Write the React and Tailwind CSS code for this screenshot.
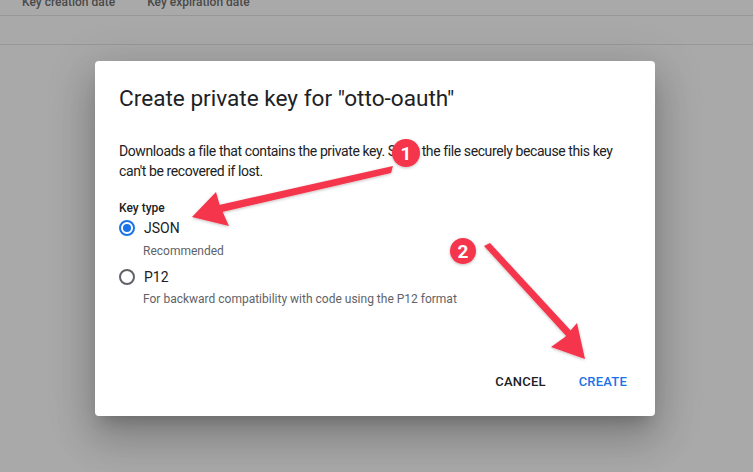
export default function App() {
  return (
    <div
      className="relative w-[753px] h-[472px] overflow-hidden bg-[#a9a9a9]"
      style={{ fontFamily: 'Roboto, "Liberation Sans", sans-serif' }}
    >
      {/* page behind the overlay */}
      <div className="h-[16px] border-b border-[#989898] flex items-end gap-[32px] pl-[22px] text-[12px] text-[#4a4a4a] font-medium leading-none overflow-hidden">
        <span className="mb-[7px]">Key creation date</span>
        <span className="mb-[7px]">Key expiration date</span>
      </div>
      <div className="h-[29px] border-b border-[#989898]" />

      {/* dialog */}
      <div className="ml-[95px] mt-[16px] w-[560px] h-[355px] bg-white rounded-[4px] shadow-[0_11px_15px_-7px_rgba(0,0,0,0.2),0_24px_38px_3px_rgba(0,0,0,0.14),0_9px_46px_8px_rgba(0,0,0,0.12)] px-[24px] pt-[22px] flex flex-col">
        <h2 className="text-[22.6px] leading-[32px] text-[#202124] font-normal">
          Create private key for "otto-oauth"
        </h2>
        <p className="mt-[26px] text-[14px] leading-[20px] text-[#202124] tracking-[-0.4px]">
          Downloads a file that contains the private key. Store the file securely because this key can't be recovered if lost.
        </p>
        <div className="mt-[19px] text-[12px] leading-[16px] font-medium text-[#202124]">Key type</div>
        <label className="mt-[2px] flex items-center gap-[9px] h-[20px]">
          <span className="w-[16px] h-[16px] rounded-full border-2 border-[#1a73e8] flex items-center justify-center">
            <span className="w-[8px] h-[8px] rounded-full bg-[#1a73e8]" />
          </span>
          <span className="text-[14px] text-[#202124]">JSON</span>
        </label>
        <div className="ml-[24px] mt-[3px] text-[12px] leading-[20px] text-[#5f6368]">Recommended</div>
        <label className="mt-[6px] flex items-center gap-[9px] h-[20px]">
          <span className="w-[16px] h-[16px] rounded-full border-2 border-[#5f6368]" />
          <span className="text-[14px] text-[#202124]">P12</span>
        </label>
        <div className="ml-[24px] mt-[2px] text-[12px] leading-[20px] text-[#5f6368]">
          For backward compatibility with code using the P12 format
        </div>
        <div className="mt-auto mb-[16px] mr-[-4px] flex justify-end gap-[17px]">
          <button className="px-[8px] h-[36px] text-[13px] font-medium tracking-[0.2px] text-[#202124]">CANCEL</button>
          <button className="px-[8px] h-[36px] text-[13px] font-medium tracking-[0.2px] text-[#1a73e8]">CREATE</button>
        </div>
      </div>

      {/* annotation arrows and badges */}
      <svg className="absolute inset-0 pointer-events-none" width="753" height="472" viewBox="0 0 753 472">
        <defs>
          <filter id="sh" x="-20%" y="-20%" width="140%" height="140%">
            <feDropShadow dx="0" dy="1" stdDeviation="1.5" floodColor="#000" floodOpacity="0.25" />
          </filter>
        </defs>
        <g fill="#f5354b" filter="url(#sh)">
          <polygon points="393,166 391,173 222,212 219,205" />
          <polygon points="192,217 216,192 220,206 229,226" />
          <polygon points="484,246 490,243 574,334 568,338" />
          <polygon points="585,359 551,347 565,337 577,323" />
          <circle cx="406" cy="153" r="14" />
          <circle cx="463" cy="251" r="13" />
        </g>
        <text x="406" y="160" textAnchor="middle" fontSize="19" fontWeight="700" fill="#fff" fontFamily="Roboto, Liberation Sans, sans-serif">1</text>
        <text x="463" y="258" textAnchor="middle" fontSize="19" fontWeight="700" fill="#fff" fontFamily="Roboto, Liberation Sans, sans-serif">2</text>
      </svg>
    </div>
  );
}
